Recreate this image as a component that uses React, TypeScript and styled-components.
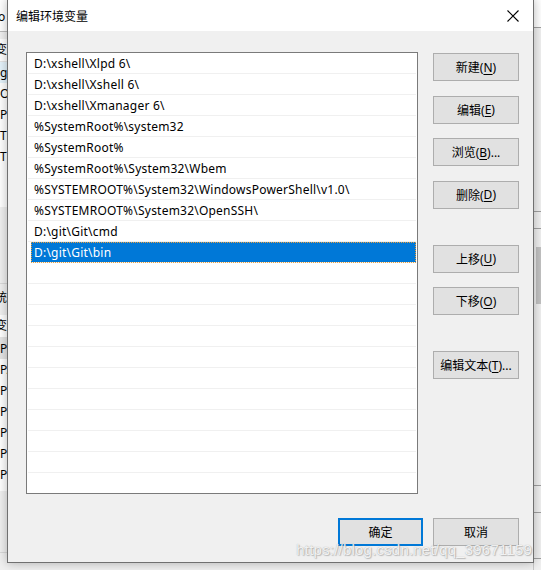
import React from 'react';
import styled, { createGlobalStyle } from 'styled-components';

const GlobalStyle = createGlobalStyle`
  html, body {
    margin: 0;
    padding: 0;
    width: 541px;
    height: 570px;
    overflow: hidden;
    background: #f0f0f0;
  }
  body {
    font-family: "Noto Sans", "Noto Sans CJK SC", sans-serif;
    font-size: 12px;
    color: #000;
  }
`;

const uiFont = `"Noto Sans", "Noto Sans CJK SC", sans-serif`;

/* ---------- parent window (Environment Variables) behind the dialog ---------- */

const Desktop = styled.div`
  position: relative;
  width: 541px;
  height: 570px;
  overflow: hidden;
  display: flex;
  justify-content: space-between;
  background: #f0f0f0;
`;

const ParentLeft = styled.div`
  width: 8px;
  display: flex;
  flex-direction: column;
  overflow: hidden;
  font-family: ${uiFont};
  font-size: 12px;
  white-space: nowrap;
`;

const ParentTop = styled.div`
  height: 32px;
  background: #fff;
  border-bottom: 1px solid #bcbcbc;
  display: flex;
  align-items: center;
  padding-top: 2px;
  box-sizing: border-box;
`;

const Frag = styled.div<{ $shift?: number; $bg?: string; $h?: number }>`
  height: ${(p) => p.$h ?? 21}px;
  line-height: ${(p) => p.$h ?? 21}px;
  margin-left: ${(p) => p.$shift ?? 0}px;
  background: ${(p) => p.$bg ?? 'transparent'};
`;

const ParentList = styled.div<{ $h: number; $top: number }>`
  height: ${(p) => p.$h}px;
  margin-top: ${(p) => p.$top}px;
  background: #fff;
  display: flex;
  flex-direction: column;
`;

const ListHead = styled.div`
  height: 22px;
  line-height: 22px;
  margin-left: -5px;
  background: #fff;
  border-bottom: 1px solid #e5e5e5;
`;

const GapArea = styled.div<{ $h: number }>`
  height: ${(p) => p.$h}px;
  border-bottom: 1px solid #d9d9d9;
  box-sizing: border-box;
`;

const ParentRight = styled.div`
  width: 8px;
  display: flex;
  flex-direction: column;
  border-left: 1px solid #c8c8c8;
  box-sizing: border-box;
`;

const RightBlock = styled.div<{ $h: number; $bg: string }>`
  height: ${(p) => p.$h}px;
  background: ${(p) => p.$bg};
  border-bottom: 1px solid #a0a0a0;
  display: flex;
  justify-content: flex-end;
  box-sizing: border-box;
`;

const ScrollThumb = styled.div`
  width: 5px;
  height: 57px;
  margin-top: 18px;
  background: #c2c2c2;
`;

/* ---------- the dialog ---------- */

const Dialog = styled.div`
  position: absolute;
  left: 7px;
  top: -1px;
  width: 527px;
  height: 564px;
  box-sizing: border-box;
  border: 1px solid #707070;
  background: #f0f0f0;
  box-shadow: 0 0 10px rgba(0, 0, 0, 0.28);
  display: flex;
  flex-direction: column;
  font-family: ${uiFont};
`;

const TitleBar = styled.div`
  height: 31px;
  background: #fff;
  display: flex;
  align-items: center;
  justify-content: space-between;
  padding: 0 13px 0 8px;
  flex-shrink: 0;
`;

const Title = styled.div`
  font-size: 12px;
  color: #000;
  padding-top: 1px;
`;

const CloseButton = styled.div`
  width: 14px;
  height: 14px;
  display: flex;
  align-items: center;
  justify-content: center;
`;

const Body = styled.div`
  flex: 1;
  display: flex;
  flex-direction: column;
  padding: 21px 14px 17px 18px;
`;

const Main = styled.div`
  flex: 1;
  display: flex;
  gap: 15px;
`;

const PathList = styled.div`
  width: 392px;
  height: 442px;
  box-sizing: border-box;
  border: 1px solid #7a7a7a;
  background: #fff;
  padding: 0 1px;
  overflow: hidden;
`;

const Row = styled.div<{ $selected?: boolean }>`
  height: 21px;
  line-height: 22px;
  box-sizing: border-box;
  border-bottom: 1px solid #f0f0f0;
  font-size: 12px;
  letter-spacing: 0.22px;
  white-space: nowrap;
  color: ${(p) => (p.$selected ? '#fff' : '#000')};
  background: ${(p) => (p.$selected ? '#0078d7' : '#fff')};
  outline: ${(p) => (p.$selected ? '1px dotted #e8a040' : 'none')};
  outline-offset: -1px;
  margin-left: ${(p) => (p.$selected ? '3px' : '0')};
  padding-left: ${(p) => (p.$selected ? '3px' : '6px')};
`;

const SideColumn = styled.div`
  display: flex;
  flex-direction: column;
  gap: 14.5px;
  padding-top: 1px;
`;

const Button = styled.div<{ $default?: boolean; $spaced?: boolean; $w?: number }>`
  width: ${(p) => p.$w ?? 86}px;
  height: 28px;
  box-sizing: border-box;
  border: ${(p) => (p.$default ? '2px solid #0078d7' : '1px solid #adadad')};
  background: #e1e1e1;
  display: flex;
  align-items: center;
  justify-content: center;
  font-size: 12px;
  color: #000;
  margin-top: ${(p) => (p.$spaced ? 21.5 : 0)}px;
  white-space: nowrap;
  flex-shrink: 0;
`;

const Key = styled.span`
  text-decoration: underline;
  text-underline-offset: 2px;
`;

const Footer = styled.div`
  display: flex;
  justify-content: flex-end;
  gap: 10px;
  margin-top: 24px;
`;

const Watermark = styled.div`
  position: absolute;
  right: 9px;
  top: 541px;
  font-family: "Liberation Sans", Arial, sans-serif;
  font-size: 15px;
  color: rgba(255, 255, 255, 0.85);
  text-shadow: 0 0 1px rgba(120, 120, 120, 0.6), 1px 1px 1px rgba(140, 140, 140, 0.5);
  letter-spacing: 0.2px;
`;

const paths = [
  'D:\\xshell\\Xlpd 6\\',
  'D:\\xshell\\Xshell 6\\',
  'D:\\xshell\\Xmanager 6\\',
  '%SystemRoot%\\system32',
  '%SystemRoot%',
  '%SystemRoot%\\System32\\Wbem',
  '%SYSTEMROOT%\\System32\\WindowsPowerShell\\v1.0\\',
  '%SYSTEMROOT%\\System32\\OpenSSH\\',
  'D:\\git\\Git\\cmd',
  'D:\\git\\Git\\bin',
];

const selectedIndex = 9;
const totalRows = 21;

function CloseIcon() {
  return (
    <svg width="12" height="12" viewBox="0 0 12 12">
      <path d="M0.5 0.5 L11.5 11.5 M11.5 0.5 L0.5 11.5" stroke="#000" strokeWidth="1.1" fill="none" />
    </svg>
  );
}

export default function App() {
  const rows = Array.from({ length: totalRows }, (_, i) => paths[i] ?? '');

  return (
    <>
      <GlobalStyle />
      <Desktop>
        <ParentLeft>
          <ParentTop>
            <Frag $shift={-2} $h={28}>o</Frag>
          </ParentTop>
          <ParentList $h={168} $top={7}>
            <ListHead>变量</ListHead>
            <Frag $bg="#e5f3fb">gitee</Frag>
            <Frag>OneDrive</Frag>
            <Frag>Path</Frag>
            <Frag>TEMP</Frag>
            <Frag>TMP</Frag>
          </ParentList>
          <GapArea $h={77} />
          <Frag $shift={-17} $h={28}>系统变量(S)</Frag>
          <ParentList $h={176} $top={3}>
            <ListHead>变量</ListHead>
            <Frag $bg="#e5e5e5">Path</Frag>
            <Frag>PATHEXT</Frag>
            <Frag>PROCESSOR_ARCHITECTURE</Frag>
            <Frag>PROCESSOR_IDENTIFIER</Frag>
            <Frag>PROCESSOR_LEVEL</Frag>
            <Frag>PROCESSOR_REVISION</Frag>
            <Frag>PSModulePath</Frag>
          </ParentList>
          <GapArea $h={62} />
        </ParentLeft>

        <ParentRight>
          <RightBlock $h={28} $bg="#fff" />
          <RightBlock $h={184} $bg="#f0f0f0" />
          <RightBlock $h={17} $bg="#f0f0f0" />
          <RightBlock $h={257} $bg="#f0f0f0">
            <ScrollThumb />
          </RightBlock>
          <RightBlock $h={27} $bg="#f0f0f0" />
          <RightBlock $h={46} $bg="#f0f0f0" />
        </ParentRight>

        <Dialog>
          <TitleBar>
            <Title>编辑环境变量</Title>
            <CloseButton>
              <CloseIcon />
            </CloseButton>
          </TitleBar>
          <Body>
            <Main>
              <PathList>
                {rows.map((p, i) => (
                  <Row key={i} $selected={i === selectedIndex}>
                    {p}
                  </Row>
                ))}
              </PathList>
              <SideColumn>
                <Button>新建(<Key>N</Key>)</Button>
                <Button>编辑(<Key>E</Key>)</Button>
                <Button>浏览(<Key>B</Key>)...</Button>
                <Button>删除(<Key>D</Key>)</Button>
                <Button $spaced>上移(<Key>U</Key>)</Button>
                <Button>下移(<Key>O</Key>)</Button>
                <Button $spaced>编辑文本(<Key>T</Key>)...</Button>
              </SideColumn>
            </Main>
            <Footer>
              <Button $default $w={85}>确定</Button>
              <Button>取消</Button>
            </Footer>
          </Body>
        </Dialog>

        <Watermark>https://blog.csdn.net/qq_39671159</Watermark>
      </Desktop>
    </>
  );
}
